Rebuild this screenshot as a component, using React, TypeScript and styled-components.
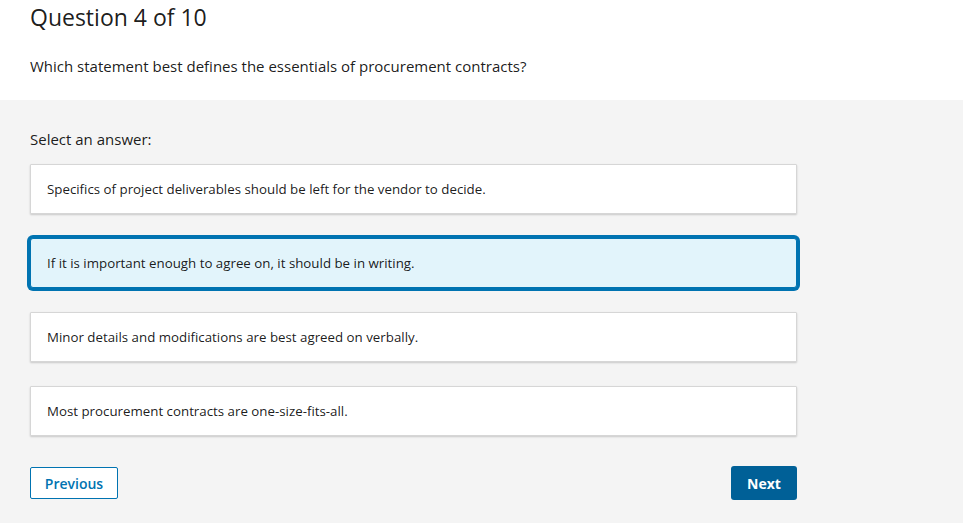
import React, { useState } from "react";
import styled, { createGlobalStyle } from "styled-components";

const Global = createGlobalStyle`
  html, body { margin: 0; padding: 0; background: #ffffff; }
  body { font-family: "Open Sans", "Noto Sans", Arial, sans-serif; color: rgba(0,0,0,0.9); }
  * { box-sizing: border-box; }
`;

const Page = styled.div`
  width: 963px;
  display: flex;
  flex-direction: column;
`;

const Header = styled.header`
  background: #ffffff;
  height: 100px;
  padding: 0 30px;
  display: flex;
  flex-direction: column;
`;

const Title = styled.h1`
  margin: 3px 0 0 0;
  font-size: 23px;
  font-weight: 400;
  line-height: 28px;
  color: rgba(0,0,0,0.9);
`;

const Prompt = styled.p`
  margin: 25px 0 0 0;
  font-size: 15px;
  line-height: 20px;
  font-weight: 400;
`;

const Body = styled.main`
  background: #f4f4f4;
  height: 423px;
  padding: 29px 30px 0 30px;
  display: flex;
  flex-direction: column;
`;

const SelectLabel = styled.div`
  font-size: 15px;
  line-height: 20px;
  margin-bottom: 15px;
`;

const OptionList = styled.div`
  width: 767px;
  display: flex;
  flex-direction: column;
  gap: 24px;
`;

const Option = styled.button<{ $selected: boolean }>`
  all: unset;
  box-sizing: border-box;
  height: 50px;
  display: flex;
  align-items: center;
  padding: 0 16px;
  font-family: "Open Sans", "Noto Sans", Arial, sans-serif;
  font-size: 13.3px;
  color: rgba(0,0,0,0.9);
  cursor: pointer;
  background: ${(p) => (p.$selected ? "#e2f4fb" : "#ffffff")};
  border: 1px solid ${(p) => (p.$selected ? "#0073b1" : "#d6d6d6")};
  border-radius: ${(p) => (p.$selected ? "3px" : "1px")};
  box-shadow: ${(p) =>
    p.$selected
      ? "0 0 0 3px #0073b1"
      : "0 1px 2px rgba(0,0,0,0.18)"};
`;

const Footer = styled.div`
  width: 767px;
  margin-top: 30px;
  display: flex;
  justify-content: space-between;
  align-items: center;
`;

const SecondaryButton = styled.button`
  height: 32px;
  width: 88px;
  background: #ffffff;
  border: 1px solid #0073b1;
  border-radius: 2px;
  color: #0073b1;
  font-family: "Open Sans", "Noto Sans", Arial, sans-serif;
  font-size: 14px;
  font-weight: 600;
  cursor: pointer;
`;

const PrimaryButton = styled.button`
  height: 34px;
  width: 66px;
  background: #006097;
  border: none;
  border-radius: 3px;
  color: #ffffff;
  font-family: "Open Sans", "Noto Sans", Arial, sans-serif;
  font-size: 14px;
  font-weight: 700;
  cursor: pointer;
`;

const options = [
  "Specifics of project deliverables should be left for the vendor to decide.",
  "If it is important enough to agree on, it should be in writing.",
  "Minor details and modifications are best agreed on verbally.",
  "Most procurement contracts are one-size-fits-all.",
];

export default function App() {
  const [selected, setSelected] = useState(1);
  return (
    <Page>
      <Global />
      <Header>
        <Title>Question 4 of 10</Title>
        <Prompt>Which statement best defines the essentials of procurement contracts?</Prompt>
      </Header>
      <Body>
        <SelectLabel>Select an answer:</SelectLabel>
        <OptionList>
          {options.map((o, i) => (
            <Option key={i} $selected={selected === i} onClick={() => setSelected(i)}>
              {o}
            </Option>
          ))}
        </OptionList>
        <Footer>
          <SecondaryButton>Previous</SecondaryButton>
          <PrimaryButton>Next</PrimaryButton>
        </Footer>
      </Body>
    </Page>
  );
}
